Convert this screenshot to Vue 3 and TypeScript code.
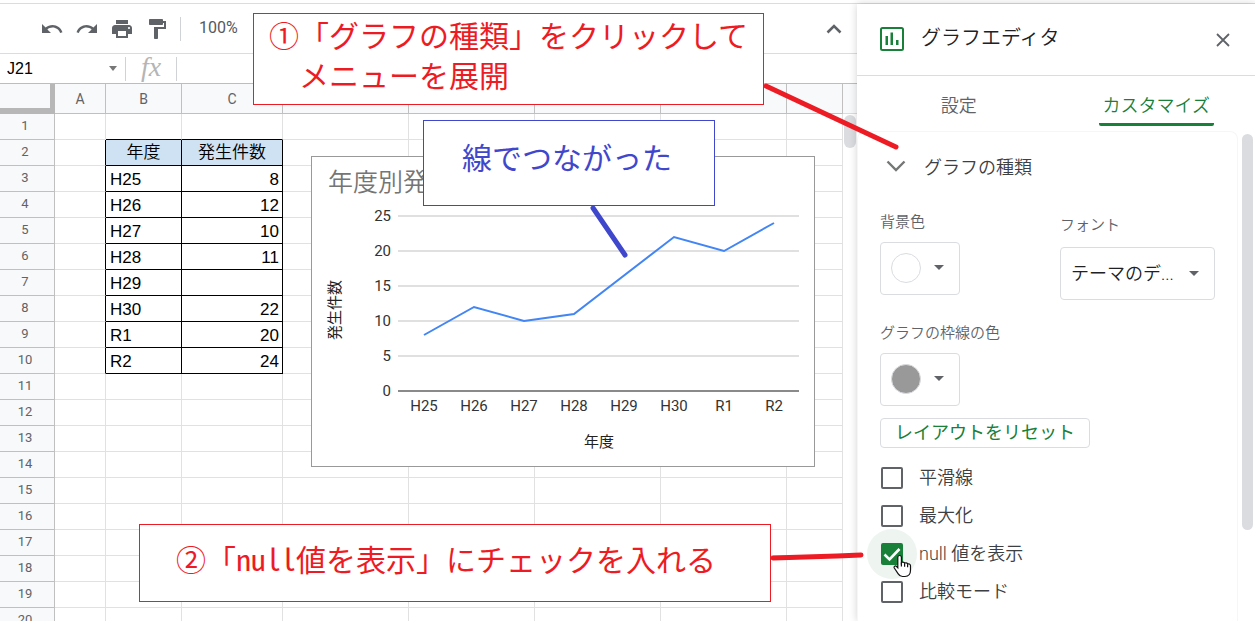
<script setup lang="ts">
import { ref } from 'vue'

interface Item { year: string; count: number | null }

const items: Item[] = [
  { year: 'H25', count: 8 },
  { year: 'H26', count: 12 },
  { year: 'H27', count: 10 },
  { year: 'H28', count: 11 },
  { year: 'H29', count: null },
  { year: 'H30', count: 22 },
  { year: 'R1', count: 20 },
  { year: 'R2', count: 24 },
]

const columns = ['A', 'B', 'C', '', '', '', '', '']
const blankColumns = 5
const rows = Array.from({ length: 20 }, (_, i) => i + 1)
const itemAt = (row: number): Item | undefined => items[row - 3]
const inTable = (row: number) => row >= 2 && row <= 10

const ticks = [25, 20, 15, 10, 5, 0]
const plotY = (v: number) => 234 - v * 7
const plotX = (i: number) => 112 + i * 50
const linePoints = items
  .map((d, i) => (d.count === null ? '' : `${plotX(i)},${plotY(d.count)}`))
  .filter(Boolean)
  .join(' ')

const cellName = ref('J21')
const formula = ref('')
const font = ref('theme')
const options = ref([
  { id: 'smooth', label: '平滑線', on: false },
  { id: 'maximize', label: '最大化', on: false },
  { id: 'nulls', label: 'null 値を表示', on: true },
  { id: 'compare', label: '比較モード', on: false },
])
</script>

<template>
  <div class="app">
    <div class="workspace">
      <main class="left">
        <div class="toolbar">
          <button class="tool" aria-label="元に戻す">
            <svg width="24" height="24" viewBox="0 0 24 24"><path d="M12.5 8c-2.65 0-5.05.99-6.9 2.6L2 7v9h9l-3.62-3.62c1.39-1.16 3.16-1.88 5.12-1.88 3.54 0 6.55 2.31 7.6 5.5l2.37-.78C21.080 11.030 17.150 8 12.5 8z" /></svg>
          </button>
          <button class="tool" aria-label="やり直し">
            <svg width="24" height="24" viewBox="0 0 24 24"><path d="M18.400 10.600C16.550 8.990 14.150 8 11.500 8c-4.650 0-8.580 3.030-9.960 7.220L3.900 16c1.050-3.190 4.050-5.500 7.600-5.500 1.950 0 3.730.72 5.120 1.880L13 16h9V7l-3.600 3.600z" /></svg>
          </button>
          <button class="tool" aria-label="印刷">
            <svg width="24" height="24" viewBox="0 0 24 24"><path d="M19 8H5c-1.660 0-3 1.340-3 3v6h4v4h12v-4h4v-6c0-1.660-1.340-3-3-3zm-3 11H8v-5h8v5zm3-7c-.55 0-1-.45-1-1s.45-1 1-1 1 .45 1 1-.45 1-1 1zm-1-9H6v4h12V3z" /></svg>
          </button>
          <button class="tool" aria-label="書式を貼り付け">
            <svg width="24" height="24" viewBox="0 0 24 24"><path d="M18 4V3c0-.55-.45-1-1-1H5c-.55 0-1 .45-1 1v4c0 .55.45 1 1 1h12c.55 0 1-.45 1-1V6h1v4H9v11c0 .55.45 1 1 1h2c.55 0 1-.45 1-1v-9h8V4h-3z" /></svg>
          </button>
          <span class="rule"></span>
          <button class="scale">100%</button>
          <button class="collapse" aria-label="メニューを非表示">
            <svg width="18" height="12" viewBox="0 0 18 12"><path d="M2.500 9.500 9 3l6.500 6.500" fill="none" stroke="#5f6368" stroke-width="2.600" /></svg>
          </button>
        </div>

        <div class="formula-bar">
          <input v-model="cellName" class="name-box" aria-label="名前ボックス" />
          <svg class="caret" width="8" height="5" viewBox="0 0 8 5"><path d="M0 0h8L4 5z" /></svg>
          <span class="rule"></span>
          <span class="fx">fx</span>
          <span class="rule"></span>
          <input v-model="formula" class="formula" aria-label="数式" />
        </div>

        <div class="sheet">
          <table class="grid">
            <colgroup>
              <col class="w-head" /><col class="w-a" /><col class="w-b" /><col class="w-c" />
              <col v-for="n in 4" :key="n" class="w-d" /><col />
            </colgroup>
            <thead>
              <tr>
                <th class="corner"></th>
                <th v-for="(c, i) in columns" :key="i" scope="col">{{ c }}</th>
              </tr>
            </thead>
            <tbody>
              <tr v-for="r in rows" :key="r">
                <th scope="row">{{ r }}</th>
                <td :class="{ 'edge-r': inTable(r) }"></td>
                <td :class="{ boxed: inTable(r), 'edge-b': r === 1, title: r === 2 }">{{ r === 2 ? '年度' : itemAt(r)?.year }}</td>
                <td class="num" :class="{ boxed: inTable(r), 'edge-b': r === 1, title: r === 2 }">{{ r === 2 ? '発生件数' : itemAt(r)?.count }}</td>
                <td v-for="n in blankColumns" :key="n"></td>
              </tr>
            </tbody>
          </table>
          <div class="gutter"><div class="gutter-head"></div><div class="thumb"></div></div>

          <figure class="chart">
            <svg width="502" height="309" viewBox="0 0 502 309" role="img" aria-label="年度別発生件数">
              <text x="16" y="34" class="chart-title">年度別発</text>
              <g v-for="t in ticks" :key="t">
                <line x1="86" x2="487" :y1="plotY(t)" :y2="plotY(t)" :class="t === 0 ? 'base' : 'gridline'" />
                <text x="79" :y="plotY(t) + 5" text-anchor="end" class="axis">{{ t }}</text>
              </g>
              <polyline :points="linePoints" class="series" />
              <text v-for="(d, i) in items" :key="d.year" :x="plotX(i)" y="254" text-anchor="middle" class="axis">{{ d.year }}</text>
              <text x="287" y="290" text-anchor="middle" class="axis-name">年度</text>
              <text transform="translate(28 153) rotate(-90)" text-anchor="middle" class="axis-name">発生件数</text>
            </svg>
          </figure>
        </div>
      </main>

      <aside class="editor">
        <header class="editor-head">
          <svg width="24" height="24" viewBox="0 0 24 24"><rect x="1" y="1" width="22" height="22" rx="1.500" fill="none" stroke="#188038" stroke-width="2" /><path d="M5.500 9H8v9H5.500zM10.500 5.500H13V18h-2.500zM16 13h2.500v5H16z" fill="#188038" /></svg>
          <h2>グラフエディタ</h2>
          <button class="close" aria-label="閉じる">
            <svg width="16" height="16" viewBox="0 0 16 16"><path d="M2 2l12 12M14 2 2 14" fill="none" stroke="#5f6368" stroke-width="1.800" /></svg>
          </button>
        </header>
        <nav class="tabs">
          <button class="tab"><span>設定</span></button>
          <button class="tab active"><span>カスタマイズ</span></button>
        </nav>
        <div class="body">
          <div class="panel">
            <button class="section">
              <svg width="20" height="14" viewBox="0 0 20 14"><path d="M1.500 2.500 10 11l8.500-8.500" fill="none" stroke="#747775" stroke-width="2.400" /></svg>
              <span>グラフの種類</span>
            </button>
            <div class="fields">
              <div class="stack">
                <span id="bg-label" class="label">背景色</span>
                <button class="swatch" aria-labelledby="bg-label">
                  <span class="dot"></span>
                  <svg width="10" height="5" viewBox="0 0 10 5"><path d="M0 0h10L5 5z" /></svg>
                </button>
                <span id="line-label" class="label second">グラフの枠線の色</span>
                <button class="swatch" aria-labelledby="line-label">
                  <span class="dot gray"></span>
                  <svg width="10" height="5" viewBox="0 0 10 5"><path d="M0 0h10L5 5z" /></svg>
                </button>
              </div>
              <div class="stack right">
                <label class="label" for="font">フォント</label>
                <div class="select">
                  <select id="font" v-model="font"><option value="theme">テーマのデ...</option></select>
                  <svg width="10" height="5" viewBox="0 0 10 5"><path d="M0 0h10L5 5z" /></svg>
                </div>
              </div>
            </div>
            <button class="reset">レイアウトをリセット</button>
            <ul class="options">
              <li v-for="o in options" :key="o.id">
                <span class="tick" :class="{ halo: o.on }"><input :id="o.id" v-model="o.on" type="checkbox" />
                  <svg v-if="o.on" class="mark" width="22" height="22" viewBox="0 0 22 22"><path d="M3.500 11.500 8.500 16.500 18.500 6" fill="none" stroke="#fff" stroke-width="2.600" /></svg>
                </span>
                <label :for="o.id">{{ o.label }}</label>
              </li>
            </ul>
          </div>
          <div class="track"><div class="thumb"></div></div>
        </div>
      </aside>
    </div>

    <div class="note red one">①「グラフの種類」をクリックして<br />　メニューを展開</div>
    <div class="note blue two">線でつながった</div>
    <div class="note red three">②「<span class="half">null</span>値を表示」にチェックを入れる</div>
    <svg class="leaders" width="1255" height="621" viewBox="0 0 1255 621">
      <path d="M766 86 896 147M773 558l64-2 24-1" stroke="#ed1c24" />
      <path d="M593 208l32 47" stroke="#3f48cc" />
    </svg>
    <svg class="cursor" width="20" height="24" viewBox="0 0 20 24">
      <path d="M6.500 1.500c1.200 0 1.900.8 1.900 1.900v5.200c.5-.8 2.800-.8 3.200.6.700-.7 2.700-.5 3 .8 1-.5 2.900 0 2.900 1.700v4.600c0 3.400-1.800 6.200-5.500 6.200H9.500c-2 0-3.200-1-4.300-2.700L1.300 14c-.8-1.400 1-2.700 2.300-1.500l1.200 1.300V3.400c0-1.100.6-1.900 1.700-1.900z" fill="#fff" stroke="#111" stroke-width="1.200" />
      <path d="M8.400 8.600v4M11.600 9.300v3.500M14.600 10.200v3" fill="none" stroke="#111" stroke-width="1.200" />
    </svg>
  </div>
</template>

<style>
body { margin: 0; background: #fff; }
</style>

<style scoped>
* { box-sizing: border-box; }
button, input, select { font: inherit; color: inherit; background: none; border: 0; padding: 0; margin: 0; outline: 0; }
svg { display: block; flex: none; }

.app {
  position: relative;
  display: flex;
  height: 100vh;
  overflow: hidden;
  padding-top: 3px;
  background: #fff;
  color: #202124;
  font-family: Roboto, "Noto Sans CJK JP", sans-serif;
}
.workspace { display: flex; flex: 1; min-width: 0; border-top: 1px solid #dadce0; }
.left { flex: 1; min-width: 0; overflow: hidden; }

.toolbar { display: flex; align-items: center; height: 50px; padding: 0 14px 0 40px; border-bottom: 1px solid #dadce0; }
.tool { margin-right: 11px; fill: #5f6368; }
.rule { flex: none; width: 1px; height: 24px; background: #d0d3d6; }
.scale { margin-left: 18px; padding-bottom: 2px; font-size: 16px; line-height: 24px; color: #55595e; }
.collapse { margin-left: auto; }

.formula-bar { display: flex; align-items: center; height: 30px; border-bottom: 1px solid #bdbdbd; }
.name-box { width: 109px; padding-left: 7px; font: 16px/24px "Liberation Sans", sans-serif; color: #000; }
.caret { margin-right: 8px; fill: #777; }
.fx { width: 50px; padding-bottom: 4px; text-align: center; font: italic 28px/28px "Liberation Serif", serif; color: #b5b5b5; }
.formula { flex: 1; min-width: 0; height: 24px; }

.sheet { position: relative; display: flex; }
.grid { flex: 1; min-width: 0; width: 100%; table-layout: fixed; border-collapse: separate; border-spacing: 0; }
.w-head { width: 55px; }
.w-a { width: 51px; }
.w-b { width: 76px; }
.w-c { width: 101px; }
.w-d { width: 126px; }
th { padding: 0; background: #f8f9fa; color: #5f6368; font-size: 14px; font-weight: 400; line-height: 16px; border-right: 1px solid #c0c0c0; border-bottom: 1px solid #c0c0c0; }
thead th { height: 30px; }
thead .corner { border-right: 5px solid #b7b7b7; border-bottom: 6px solid #b7b7b7; }
tbody th { height: 26px; padding: 0 4px 2px 0; font-size: 13px; }
td { height: 26px; padding: 2px 3px 0 4px; font: 17px/20px "Liberation Sans", "Noto Sans CJK JP", sans-serif; color: #000; white-space: nowrap; border-right: 1px solid #e1e1e1; border-bottom: 1px solid #e1e1e1; }
td.num { text-align: right; }
td.edge-r { border-right-color: #000; }
td.edge-b { border-bottom-color: #000; }
td.boxed { border-color: #000; }
td.title { padding: 0; text-align: center; background: #cfe2f3; font-weight: 350; }

.gutter { width: 14px; }
.gutter-head { height: 30px; background: #f8f9fa; border-bottom: 1px solid #dadce0; }
.gutter .thumb { width: 12px; height: 33px; margin: 1px auto 0; border-radius: 6px; background: #dadce0; }

.chart { position: absolute; left: 311px; top: 72px; margin: 0; border: 1px solid #999; background: #fff; }
.chart-title { font: 350 25px "Noto Sans CJK JP", sans-serif; fill: #757575; }
.gridline { stroke: #e0e0e0; stroke-width: 2; }
.base { stroke: #8a8a8a; stroke-width: 2; }
.axis { font-size: 15px; fill: #333; }
.axis-name { font-size: 15px; fill: #222; }
.series { fill: none; stroke: #4285f4; stroke-width: 2; }

.editor { position: relative; display: flex; flex-direction: column; flex: none; width: 398px; background: #fff; box-shadow: 0 0 8px rgba(0, 0, 0, 0.18); font-weight: 350; }
.editor-head { display: flex; align-items: center; height: 72px; padding: 0 24px 2px 23px; border-bottom: 1px solid #dadce0; }
h2 { margin: 0 0 2px 17px; font-size: 20px; font-weight: 350; line-height: 28px; }
.close { margin: 2px 0 0 auto; }
.tabs { display: flex; height: 55px; padding-left: 3px; }
.tab { flex: 1; display: flex; justify-content: center; height: 50px; font-size: 18px; line-height: 34px; color: #5f6368; }
.tab span { padding: 13px 4px 0; border-bottom: 3px solid transparent; border-radius: 2px; }
.tab.active { color: #188038; }
.tab.active span { border-bottom-color: #188038; }

.body { display: flex; flex: 1; min-height: 0; }
.panel { flex: 1; min-width: 0; padding: 0 22px; border: 1px solid #f6f6f6; border-bottom: 0; border-radius: 8px 8px 0 0; }
.section { display: flex; align-items: center; gap: 18px; width: 100%; height: 70px; padding: 0 0 2px 6px; font-size: 18px; color: #3c4043; }
.fields { display: grid; grid-template-columns: 180px 1fr; }
.stack { display: flex; flex-direction: column; align-items: flex-start; gap: 10px; padding-top: 10px; }
.stack.right { gap: 12px; padding-top: 13px; }
.label { font-size: 15px; line-height: 20px; color: #5f6368; }
.second { margin-top: 18px; }
.swatch { display: flex; align-items: center; gap: 13px; width: 80px; height: 53px; padding: 0 0 2px 10px; border: 1px solid #dadce0; border-radius: 4px; fill: #5f6368; }
.dot { width: 30px; height: 30px; border: 1px solid #dadce0; border-radius: 50%; background: #fff; }
.dot.gray { background: #999; }
.select { position: relative; display: flex; align-items: center; width: 155px; height: 53px; border: 1px solid #dadce0; border-radius: 4px; }
.select select { width: 100%; height: 100%; padding-left: 10px; appearance: none; font-size: 18px; }
.select svg { position: absolute; right: 15px; fill: #5f6368; pointer-events: none; }
.reset { display: block; width: 210px; height: 30px; margin-top: 12px; border: 1px solid #dadce0; border-radius: 4px; font-size: 18px; font-weight: 400; line-height: 26px; color: #188038; }
.options { margin: 11px 0 0; padding: 0; list-style: none; }
.options li { display: flex; align-items: center; gap: 16px; height: 38px; padding-left: 1px; font-size: 18px; line-height: 26px; color: #3c4043; }
.tick { position: relative; display: flex; width: 22px; height: 22px; border-radius: 50%; }
.tick.halo { box-shadow: 0 0 0 14px #eef5f0; background: #eef5f0; }
.tick input { appearance: none; width: 22px; height: 22px; border: 2px solid #5f6368; border-radius: 2px; background: #fff; }
.tick input:checked { border-color: #188038; background: #188038; }
.mark { position: absolute; inset: 0; pointer-events: none; }
.track { width: 17px; padding: 3px 2px 0 4px; }
.track .thumb { width: 11px; height: 396px; border-radius: 6px; background: #dadce0; }

.note { position: absolute; display: flex; align-items: center; background: #fff; border: 1px solid; font: 30px/40px "Noto Sans CJK JP", sans-serif; white-space: nowrap; }
.red { color: #ed1c24; }
.blue { color: #3f48cc; }
.one { display: block; left: 253px; top: 13px; width: 511px; height: 92px; padding: 0 15px; }
.two { left: 423px; top: 120px; width: 292px; height: 86px; padding: 0 38px 14px; }
.three { left: 139px; top: 524px; width: 632px; height: 78px; padding: 0 36px 10px; }
.half { font-feature-settings: "hwid"; }
.leaders { position: absolute; left: 0; top: 0; fill: none; stroke-width: 5; stroke-linecap: round; pointer-events: none; }
.cursor { position: absolute; left: 893px; top: 554px; pointer-events: none; }
</style>
